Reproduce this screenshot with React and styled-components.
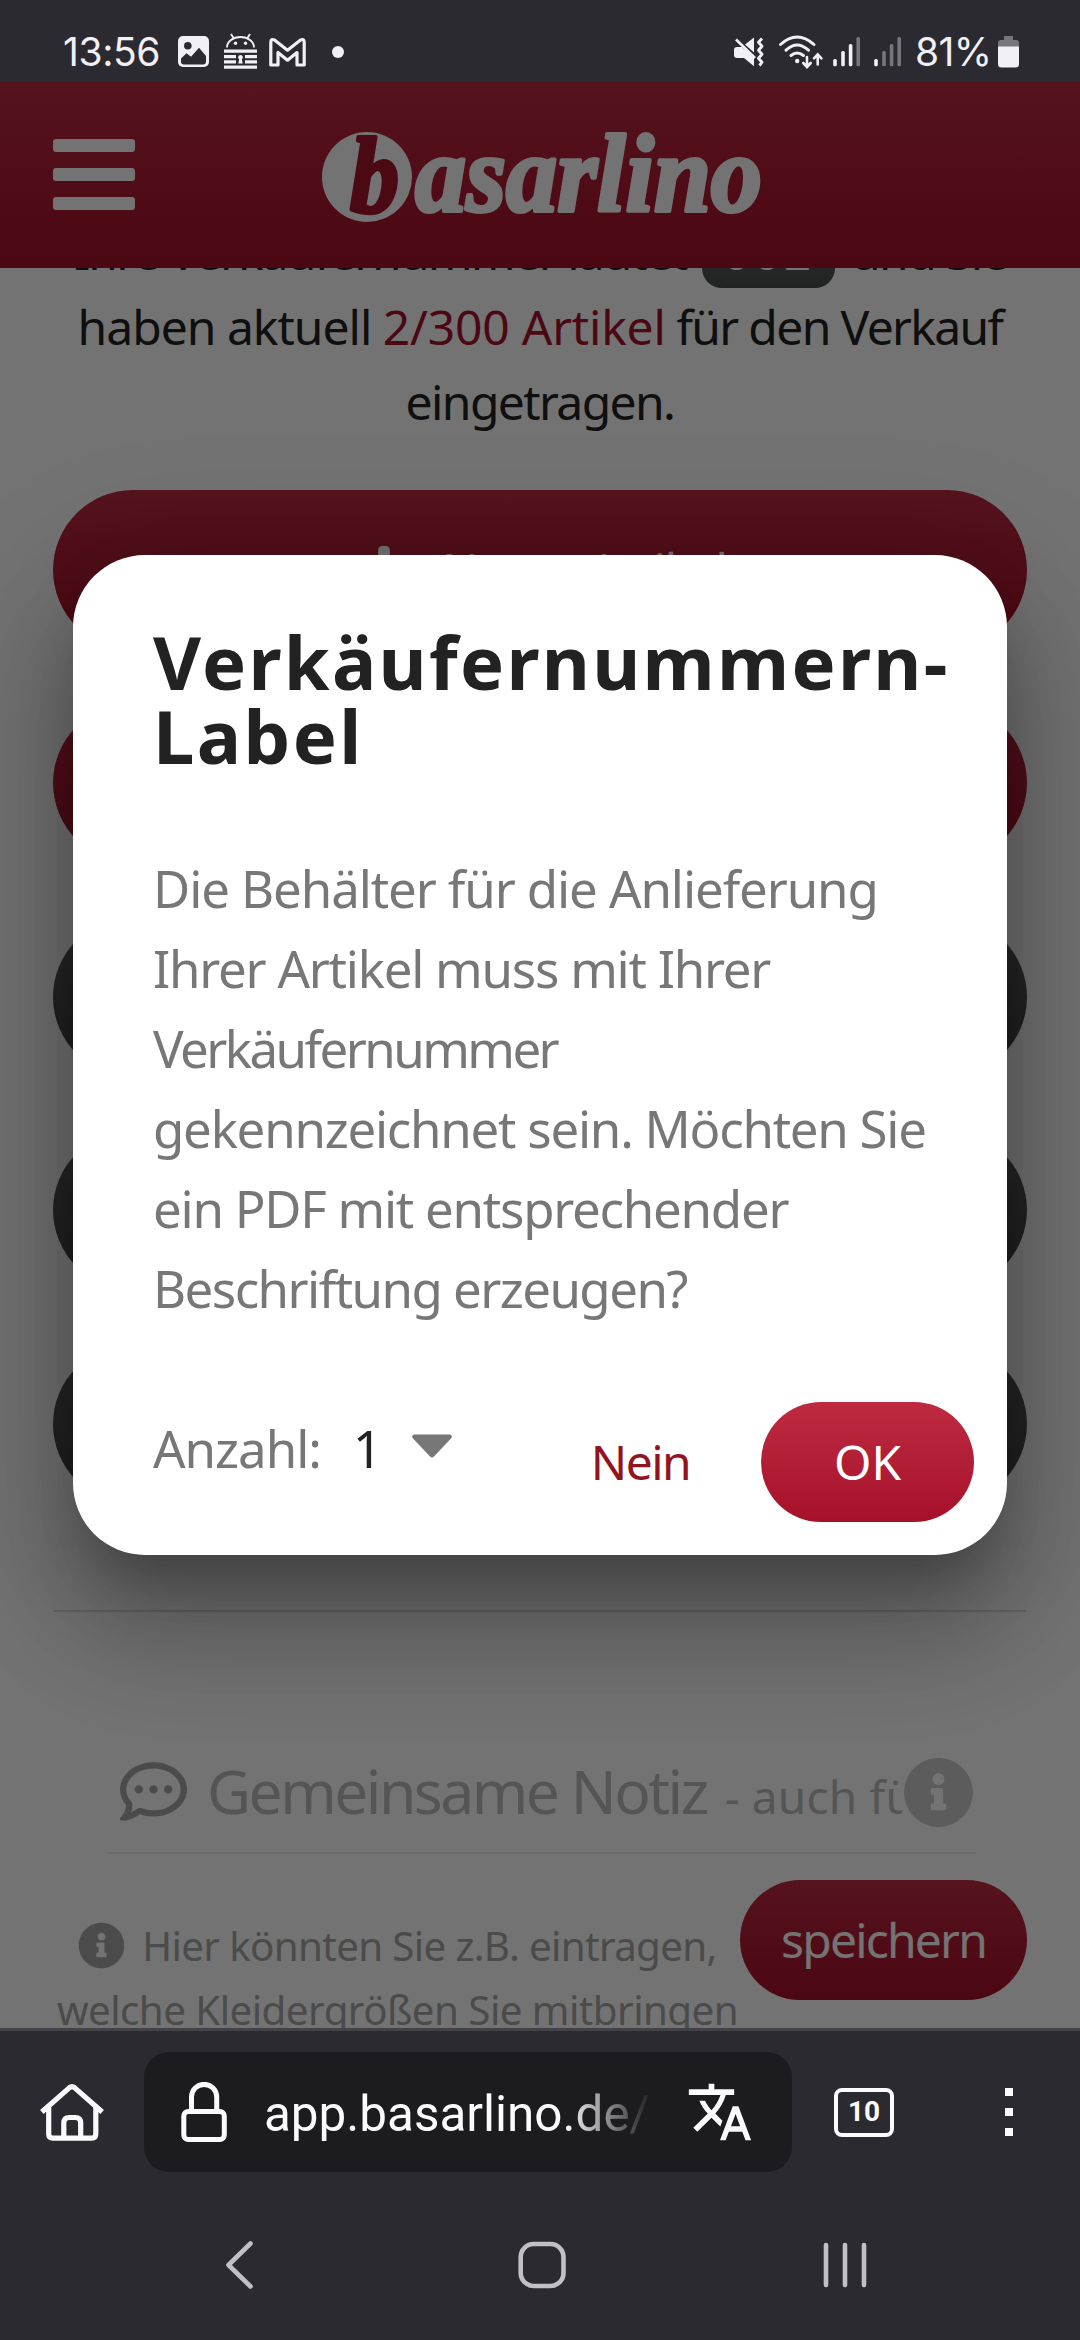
import React from 'react';
import styled, { createGlobalStyle, css } from 'styled-components';
import { FaRegCommentDots } from 'react-icons/fa6';
import { FaInfoCircle, FaPlus } from 'react-icons/fa';
import { MdTranslate } from 'react-icons/md';

const Global = createGlobalStyle`
  * { box-sizing: border-box; }
  body { margin: 0; background: #2b2a30; }
  svg { display: block; flex: none; }
`;

const textFont = '"Noto Sans", "Open Sans", sans-serif';
const systemFont = 'Inter, Roboto, sans-serif';
const redGradient = 'linear-gradient(#be2b41, #a61129)';

const Screen = styled.div`
  width: 1080px;
  height: 2340px;
  display: flex;
  flex-direction: column;
  overflow: hidden;
  background: #2b2a30;
  font-family: ${textFont};
`;

/* ---------- status bar ---------- */
const StatusBar = styled.div`
  flex: none;
  height: 81px;
  padding: 22px 61px 0 63px;
  display: flex;
  align-items: center;
  justify-content: space-between;
  color: #f1f0f5;
  font: 400 39px/60px ${systemFont};
`;

const StatusGroup = styled.div`
  display: flex;
  align-items: center;
  gap: ${(p) => p.$gap || 0}px;
`;

const StatusText = styled.span`
  width: ${(p) => p.$width}px;
  white-space: nowrap;
  letter-spacing: ${(p) => p.$tracking || 0}px;
`;

const Dot = styled.span`
  width: 12px;
  height: 12px;
  margin-left: 27px;
  border-radius: 50%;
  background: #f1f0f5;
`;

const Glyph = ({ box, ...rest }) => {
  const [, , w, h] = box.split(' ');
  return <svg viewBox={box} width={w} height={h} fill="none" {...rest} />;
};

/* ---------- web page ---------- */
const Viewport = styled.main`
  position: relative;
  flex: none;
  height: 1947px;
  overflow: hidden;
  display: flex;
  flex-direction: column;
  background: #fff;
`;

const Header = styled.header`
  position: relative;
  z-index: 1;
  flex: none;
  height: 187px;
  padding: 5px 53px 0;
  display: flex;
  align-items: center;
  background: ${redGradient};
`;

const Burger = styled.div`
  width: 82px;
  display: grid;
  gap: 15.5px;
  margin-bottom: 5px;
`;

const BurgerBar = styled.span`
  height: 13.6px;
  border-radius: 3px;
  background: #fff;
`;

const LogoSlot = styled.div`
  margin: 2px 0 0 185px;
`;

const Page = styled.div`
  margin-top: -54px;
  display: flex;
  flex-direction: column;
`;

const Intro = styled.div`
  color: #222;
  font-size: 48px;
  line-height: 75px;
  text-align: center;
`;

const Line = styled.div`
  white-space: nowrap;
  letter-spacing: ${(p) => p.$tracking || 0}px;
`;

const BadgeLine = styled(Line)`
  display: flex;
  height: 75px;
  padding-left: 74px;
`;

const LeadText = styled.span`
  width: 628px;
  text-align: left;
  letter-spacing: -1.9px;
`;

const Badge = styled.span`
  width: 133px;
  height: 74px;
  margin-right: 16px;
  border-radius: 20px;
  letter-spacing: 3px;
  color: #fff;
  background: linear-gradient(#6a6a6a, #4b4e4d);
`;

const Accent = styled.span`
  color: #a61129;
  letter-spacing: -0.2px;
`;

const Actions = styled.div`
  margin: 51px 53px 0 53px;
  display: grid;
  gap: 53.4px;
`;

const pill = css`
  display: flex;
  align-items: center;
  justify-content: center;
  color: #fff;
  white-space: nowrap;
`;

const ActionButton = styled.div`
  ${pill}
  height: 160px;
  border-radius: 80px;
  gap: 27px;
  font-size: 48px;
  letter-spacing: -1px;
  background: ${(p) => (p.$dark ? 'linear-gradient(#5c5c5c, #414141)' : redGradient)};
`;

const ActionLabel = styled.span`
  margin-bottom: 2px;
`;

const ActionIcon = styled.span`
  margin-top: 6px;
`;

const Divider = styled.div`
  height: 2px;
  margin: 106px 54px 0 53px;
  background: #dedede;
`;

const NoteHead = styled.div`
  height: 123px;
  margin: 119px 104px 0 108px;
  padding: 0 2px 0 12px;
  display: flex;
  align-items: center;
  border-bottom: 2px solid #f0f0f0;
  color: #a6a6a6;
`;

const NoteTitle = styled.div`
  width: 715px;
  height: 82px;
  padding-left: 20px;
  display: flex;
  align-items: baseline;
  overflow: hidden;
  white-space: nowrap;
  line-height: 82px;
  font-size: 60.5px;
  letter-spacing: -2.5px;
  color: #bcbcbc;
`;

const NoteSub = styled.span`
  margin-left: 18px;
  font-size: 46px;
  letter-spacing: 0.2px;
  color: #bcbcbc;
`;

const NoteInfo = styled.span`
  margin: 3px 0 0 auto;
  color: #cdcdcd;
`;

const NoteBody = styled.div`
  margin-top: 26px;
  padding: 0 53px 0 55px;
  display: flex;
  align-items: flex-start;
`;

const NoteText = styled.div`
  width: 685px;
  padding-top: 34px;
  font-size: 40.3px;
  line-height: 64px;
  color: #a6a6a6;
`;

const NoteLine = styled(Line)`
  display: flex;
  align-items: center;
  justify-content: center;
  gap: 17px;
`;

const SaveButton = styled.div`
  ${pill}
  width: 287px;
  height: 120px;
  border-radius: 60px;
  font-size: 48px;
  letter-spacing: -1.8px;
  background: ${redGradient};
`;

/* ---------- dialog ---------- */
const Overlay = styled.div`
  position: absolute;
  inset: 0;
  z-index: 2;
  display: flex;
  align-items: center;
  justify-content: center;
  background: rgba(0, 0, 0, 0.55);
`;

const Dialog = styled.section`
  width: 934px;
  height: 1000px;
  padding: 70px 33px 33px 80px;
  display: flex;
  flex-direction: column;
  border-radius: 72px;
  background: #fff;
  box-shadow:
    0 72px 110px 9px rgba(0, 0, 0, 0.2),
    0 27px 130px 24px rgba(0, 0, 0, 0.15),
    0 36px 50px -18px rgba(0, 0, 0, 0.22);
`;

const DialogTitle = styled.h1`
  margin: 0;
  color: #222;
  font-size: 74px;
  font-weight: 700;
  line-height: 74px;
`;

const DialogText = styled.div`
  margin-top: 75px;
  color: #777;
  font-size: 51px;
  line-height: 80px;
`;

const DialogFoot = styled.div`
  height: 120px;
  margin-top: auto;
  display: flex;
  align-items: center;
`;

const Field = styled.div`
  display: flex;
  align-items: center;
  height: 80px;
  margin-bottom: 27px;
  color: #777;
  font-size: 51px;
`;

const FieldValue = styled.span`
  margin: 0 30px 0 32px;
  color: #222;
`;

const Caret = styled.span`
  margin-bottom: 4px;
`;

const Cancel = styled.div`
  margin-left: auto;
  margin-right: 71px;
  color: #93131f;
  font-size: 48px;
  letter-spacing: -1.6px;
`;

const Confirm = styled.div`
  ${pill}
  width: 213px;
  height: 120px;
  border-radius: 60px;
  font-size: 48px;
  background: ${redGradient};
`;

/* ---------- browser + system bars ---------- */
const Toolbar = styled.div`
  flex: none;
  height: 165px;
  padding: 0 67px 0 40px;
  border-top: 3px solid #434248;
  display: flex;
  align-items: center;
`;

const AddressBar = styled.div`
  width: 648px;
  height: 120px;
  margin: 0 42px 0 40px;
  padding: 0 38px 0 37px;
  display: flex;
  align-items: center;
  border-radius: 25px;
  background: #1c1b20;
  color: #fbfbfe;
`;

const Url = styled.div`
  flex: 1;
  margin: 4px 32px 0 37px;
  white-space: nowrap;
  font: 400 49.4px/64px Roboto, sans-serif;
  mask-image: linear-gradient(90deg, #000 300px, transparent 388px);
`;

const Tabs = styled.div`
  width: 60px;
  height: 49px;
  border: 4.5px solid #fbfbfe;
  border-radius: 8px;
  text-align: center;
  color: #fbfbfe;
  font: 700 28px/39px Roboto, sans-serif;
`;

const More = styled.div`
  margin-left: auto;
  display: grid;
  gap: 12px;
`;

const MoreDot = styled.span`
  width: 8px;
  height: 8px;
  background: #fbfbfe;
`;

const NavBar = styled.nav`
  flex: 1;
  padding: 0 84px 3px 89px;
  display: grid;
  grid-template-columns: repeat(3, 1fr);
  place-items: center;
`;

const W = '#f1f0f5';
const G = '#77767b';

const Signal = ({ x, level }) => (
  <Glyph box={`${x} 36 28 32`}>
    {[[0.2, 59], [8.2, 51], [15.8, 44], [23.4, 37]].map(([dx, y], i) => (
      <rect key={dx} x={x + dx} y={y} width="3.6" height={66.3 - y} rx="1.5" fill={i < level ? W : G} />
    ))}
  </Glyph>
);

function Status() {
  return (
    <StatusBar>
      <StatusGroup>
        <StatusText $width={115} $tracking={-0.4}>13:56</StatusText>
        <StatusGroup $gap={10}>
          <Glyph box="178 37 31 31">
            <rect x="178" y="37" width="31" height="31" rx="5" fill={W} />
            <circle cx="187.8" cy="46.7" r="3.8" fill="#2b2a30" />
            <path d="M181 59.5l5.5-5.3 4.5 3.6 8-9 7 8.2v5.5q0 3-3 3h-19q-3 0-3-3z" fill="#2b2a30" />
          </Glyph>
          <Glyph box="219 34 41 37">
            <path d="M227 48.5a13.5 10.5 0 0 1 27 0M231 35l3.2 5M250 35l-3.2 5" stroke={W} strokeWidth="1.9" />
            <circle cx="235.5" cy="44.3" r="1.7" fill={W} />
            <circle cx="245.5" cy="44.3" r="1.7" fill={W} />
            <path d="M224 50.5h33v3.2h-33zM224 56h12v3.2h-12zM245 56h12v3.2h-12zM224 61.2h12v3.2h-12zM245 61.2h12v3.2h-12zM224 66.5h33v3.2h-33z" fill={W} />
            <path d="M238.2 59a2.4 2.4 0 1 1 4.6 0l-1 1.5 1 4h-4.6l1-4z" fill={W} />
          </Glyph>
          <Glyph box="270 37 35 30" overflow="visible">
            <path d="M270.8 65V42.5q0-4.5 4-2.3l12.7 10 12.7-10q4-2.2 4 2.3V65h-7.2V52.5l-9.5 7.700-9.500-7.700V65z" stroke={W} strokeWidth="3.2" strokeLinejoin="round" />
          </Glyph>
        </StatusGroup>
        <Dot />
      </StatusGroup>
      <StatusGroup $gap={13}>
        <Glyph box="733 36 33 32">
          <path d="M734 50q0-3 3-3h5l12 10.5V66.3l-10-8.3h-7q-3 0-3-3zM745 44.5l9-7v15z" fill={W} />
          <path d="M736 39.5L755 58" stroke={W} strokeWidth="2.6" />
          <path d="M762 38.5l-3.5 3.7 3.5 4-3.5 4 3.5 4-3.5 4 3.5 4-2.5 3.3" stroke={W} strokeWidth="2.9" strokeLinejoin="round" />
        </Glyph>
        <Glyph box="778 34 41 35" overflow="visible" stroke={W} strokeWidth="3" strokeLinecap="round">
          <path d="M779.5 44.5q16.5-15 33.5 0M785 50.2q11-10.5 22.5 0M790 55.5q6-5 12.5 0" />
          <circle cx="796.2" cy="61" r="1.2" fill={W} strokeWidth="2" />
          <path d="M806 57v9.5M802.3 63l3.7 4 3.7-4M816.7 64.5v-9.5M813 58.3l3.7-4 3.7 4" strokeWidth="2.6" />
        </Glyph>
        <Signal x={831} level={3} />
        <Signal x={872} level={1} />
        <StatusGroup>
          <StatusText $width={83} $tracking={-0.6}>81%</StatusText>
          <Glyph box="997 36 21 32">
            <path d="M1003 36h9v4h3q3 0 3 3v4h-21v-4q0-3 3-3h3z" fill={G} />
            <path d="M997 46.5h21V64q0 3.5-3.5 3.5h-14q-3.5 0-3.5-3.5z" fill={W} />
          </Glyph>
        </StatusGroup>
      </StatusGroup>
    </StatusBar>
  );
}

const Logo = () => (
  <Glyph box="319 130 444 96" fontFamily='"Liberation Serif", serif' fontStyle="italic" fontWeight="700">
    <ellipse cx="366" cy="177" rx="45" ry="45" fill="#fff" />
    <text x="349" y="212" fontSize="108" textLength="49" lengthAdjust="spacingAndGlyphs" fill="#a5162c" stroke="#a5162c" strokeWidth="4" strokeLinejoin="round">b</text>
    <text x="414" y="211" fontSize="110" textLength="347" lengthAdjust="spacingAndGlyphs" fill="#fff" stroke="#fff" strokeWidth="4" strokeLinejoin="round">asarlino</text>
  </Glyph>
);

export default function App() {
  return (
    <Screen>
      <Global />
      <Status />
      <Viewport>
        <Header>
          <Burger>
            <BurgerBar />
            <BurgerBar />
            <BurgerBar />
          </Burger>
          <LogoSlot>
            <Logo />
          </LogoSlot>
        </Header>
        <Page>
          <Intro>
            <BadgeLine>
              <LeadText>Ihre Verkäufernummer lautet</LeadText>
              <Badge>002</Badge>
              <Line as="span" $tracking={-1.6}>und Sie</Line>
            </BadgeLine>
            <Line $tracking={-1}>
              haben aktuell <Accent>2/300 Artikel</Accent>
              <Line as="span" $tracking={-1.65}> für den Verkauf</Line>
            </Line>
            <Line $tracking={-1.6}>eingetragen.</Line>
          </Intro>
          <Actions>
            <ActionButton>
              <ActionIcon>
                <FaPlus size={62} />
              </ActionIcon>
              <ActionLabel>Neuer Artikel</ActionLabel>
            </ActionButton>
            <ActionButton />
            <ActionButton $dark />
            <ActionButton $dark />
            <ActionButton $dark />
          </Actions>
          <Divider />
          <NoteHead>
            <FaRegCommentDots size={67} />
            <NoteTitle>
              Gemeinsame Notiz<NoteSub>- auch fü</NoteSub>
            </NoteTitle>
            <NoteInfo>
              <FaInfoCircle size={71} />
            </NoteInfo>
          </NoteHead>
          <NoteBody>
            <NoteText>
              <NoteLine $tracking={-0.65}>
                <FaInfoCircle size={47} />
                <span>Hier könnten Sie z.B. eintragen,</span>
              </NoteLine>
              <NoteLine $tracking={-0.55}>welche Kleidergrößen Sie mitbringen</NoteLine>
            </NoteText>
            <SaveButton>speichern</SaveButton>
          </NoteBody>
        </Page>
        <Overlay>
          <Dialog>
            <DialogTitle>
              <Line $tracking={2.3}>Verkäufernummern-</Line>
              <Line $tracking={2.4}>Label</Line>
            </DialogTitle>
            <DialogText>
              <Line $tracking={-1.1}>Die Behälter für die Anlieferung</Line>
              <Line $tracking={-1.25}>Ihrer Artikel muss mit Ihrer</Line>
              <Line $tracking={-2.55}>Verkäufernummer</Line>
              <Line $tracking={-1.25}>gekennzeichnet sein. Möchten Sie</Line>
              <Line $tracking={-1.25}>ein PDF mit entsprechender</Line>
              <Line $tracking={-1.55}>Beschriftung erzeugen?</Line>
            </DialogText>
            <DialogFoot>
              <Field>
                <Line as="span" $tracking={-1}>Anzahl:</Line>
                <FieldValue>1</FieldValue>
                <Caret>
                  <svg width="40" height="24" viewBox="0 0 40 24">
                    <path d="M2 0.5h36q3 1 1 4L22 22.5q-2 2-4 0L1 4.5q-2-3 1-4z" fill="#777" />
                  </svg>
                </Caret>
              </Field>
              <Cancel>Nein</Cancel>
              <Confirm>OK</Confirm>
            </DialogFoot>
          </Dialog>
        </Overlay>
      </Viewport>
      <Toolbar>
        <Glyph box="40 2080 64 61" stroke="#fbfbfe" strokeWidth="5.2" strokeLinejoin="round">
          <path d="M41.8 2110L69.5 2085.6q2.5-2 5 0L102.2 2110M48.7 2105v27q0 4.2 4.2 4.2h38.7q4.2 0 4.2-4.2v-27M63.8 2136v-15q0-5.5 5.5-5.5h5.9q5.5 0 5.5 5.5v15" />
        </Glyph>
        <AddressBar>
          <Glyph box="181 2082 46 60" stroke="#fbfbfe" strokeWidth="5">
            <rect x="183.8" y="2111.5" width="40.5" height="28" rx="4.5" />
            <path d="M191.5 2111v-14a12.6 12.6 0 0 1 25.2 0v14" />
          </Glyph>
          <Url>app.basarlino.de/</Url>
          <MdTranslate size={68} />
        </AddressBar>
        <Tabs>10</Tabs>
        <More>
          <MoreDot />
          <MoreDot />
          <MoreDot />
        </More>
      </Toolbar>
      <NavBar>
        <Glyph box="225 2240 30 50" stroke="#c1c0c5" strokeWidth="4.6" strokeLinecap="round" strokeLinejoin="round">
          <path d="M250.5 2243.5L228.5 2265l22 21.5" />
        </Glyph>
        <Glyph box="517 2241 48 48" stroke="#c1c0c5" strokeWidth="4.6">
          <rect x="519.7" y="2244" width="42.8" height="42" rx="13" />
        </Glyph>
        <Glyph box="822 2241 44 48" stroke="#c1c0c5" strokeWidth="4.6" strokeLinecap="round">
          <path d="M825 2245v40M844 2245v40M863 2245v40" />
        </Glyph>
      </NavBar>
    </Screen>
  );
}
